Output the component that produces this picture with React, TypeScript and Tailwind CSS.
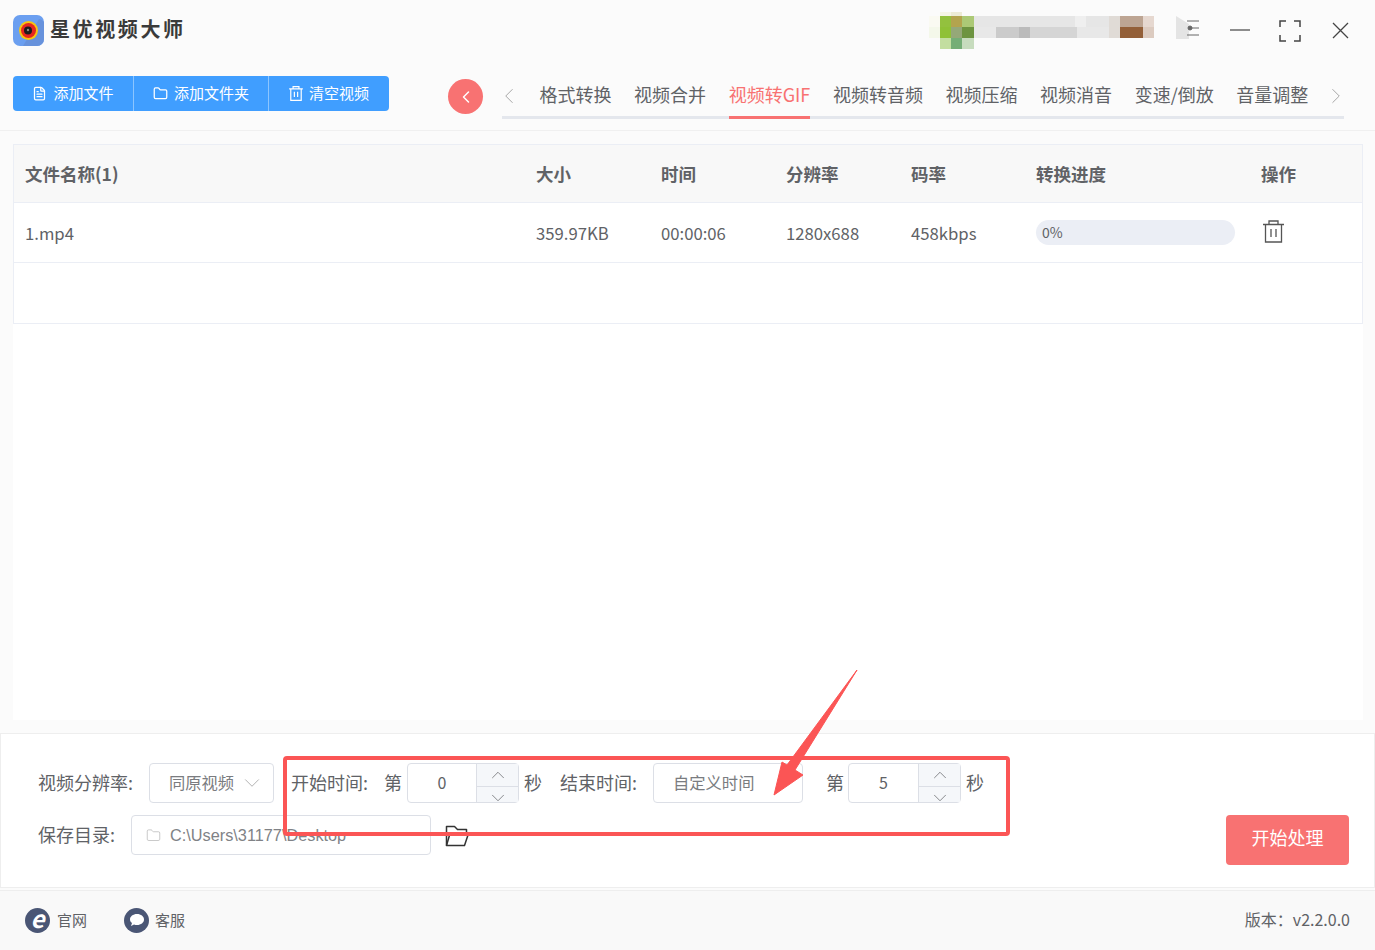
import { ChevronDown, ChevronLeft, ChevronRight, ChevronUp, FileText, Folder } from "lucide-react";

const tabs = ["格式转换", "视频合并", "视频转GIF", "视频转音频", "视频压缩", "视频消音", "变速/倒放", "音量调整"];
const font = { fontFamily: '"Noto Sans CJK SC", "Liberation Sans", sans-serif' };

// pixelated (mosaic) user name in the title bar: [x, y, w, h, colour]
const mosaic: [number, number, number, number, string][] = [
  [0, 4, 11, 11, "#fafaf2"], [0, 15, 11, 11, "#f4f8ea"], [11, 0, 11, 4, "#f5f5e6"], [11, 4, 11, 11, "#93c13e"], [11, 15, 11, 11, "#8fc136"],
  [22, 0, 11, 4, "#ecebd6"], [22, 4, 11, 11, "#b3a44e"], [22, 15, 11, 11, "#95a878"], [11, 26, 11, 11, "#c3dea0"],
  [33, 4, 12, 11, "#acc976"], [33, 15, 12, 11, "#6d9440"], [22, 26, 11, 11, "#75ae76"], [33, 26, 12, 11, "#c7dcbe"],
  [45, 4, 180, 11, "#e6e6e6"], [45, 15, 180, 11, "#e8e8e8"], [67, 15, 23, 11, "#cbcbcb"], [90, 15, 11, 11, "#bbbbbb"],
  [101, 15, 47, 11, "#d5d5d5"], [146, 4, 11, 11, "#efefef"], [180, 4, 11, 22, "#e0dbd6"], [191, 4, 23, 11, "#bda593"],
  [191, 15, 23, 11, "#935f38"], [214, 4, 11, 11, "#e6d8d0"], [214, 15, 11, 11, "#dccbc0"],
];

function TrashIcon({ width, height, stroke, strokeWidth, className }: { width: number; height: number; stroke: string; strokeWidth: number; className?: string }) {
  return (
    <svg width={width} height={height} viewBox="0 0 21 23" fill="none" stroke={stroke} strokeWidth={strokeWidth} className={className}>
      <path d="M0 4.500h21M6 4.500V1h9v3.500M2.500 4.500V22h16V4.500M8 9v8M13 9v8" />
    </svg>
  );
}

function Stepper({ value, width }: { value: string; width: string }) {
  return (
    <div className={`flex h-10 rounded border border-[#dcdfe6] bg-white ${width}`}>
      <div className="flex flex-1 items-center justify-center pb-[2px] text-[16px] text-[#606266]">{value}</div>
      <div className="flex w-[42px] flex-col border-l border-[#dcdfe6] bg-[#f5f7fa] text-[#606266]">
        <div className="flex flex-1 items-center justify-center border-b border-[#dcdfe6]">
          <ChevronUp size={22} strokeWidth={0.8} />
        </div>
        <div className="flex flex-1 items-center justify-center">
          <ChevronDown size={22} strokeWidth={0.8} />
        </div>
      </div>
    </div>
  );
}

export default function App() {
  return (
    <div className="relative flex h-[950px] w-[1375px] flex-col overflow-hidden bg-[#fbfbfb]" style={font}>
      {/* title bar */}
      <div className="flex h-[76px] shrink-0 items-start justify-between">
        <div className="ml-[13px] mt-[15px] flex items-center gap-[6px]">
          <svg width="31" height="31" viewBox="0 0 31 31">
            <rect width="31" height="31" rx="7" fill="#6b9ff0" />
            <path d="M31 7v17a7 7 0 0 1-7 7H10L26 4a7 7 0 0 1 5 3z" fill="#6792dc" />
            <circle cx="15.500" cy="15.500" r="9.500" fill="#f7c511" />
            <circle cx="15.500" cy="15.500" r="7.500" fill="#e5261f" />
            <circle cx="15" cy="15.500" r="4" fill="#1c1c1c" />
            <circle cx="15" cy="15" r="1.200" fill="#8a8a8a" />
          </svg>
          <span className="-mt-[4px] text-[20px] font-bold tracking-[2.6px] text-[#3a3a3a]">星优视频大师</span>
        </div>
        <div className="mr-[26px] mt-[12px] flex items-start">
          <svg width="226" height="38" viewBox="0 0 226 38" className="mr-[21px]">
            {mosaic.map(([x, y, w, h, c], i) => (
              <rect key={i} x={x} y={y} width={w} height={h} fill={c} />
            ))}
          </svg>
          <svg width="24" height="24" viewBox="0 0 24 24" fill="none" stroke="#666" strokeWidth="1" className="mr-[30px] mt-[4px]">
            <path d="M0 0l13 8V23H0z" fill="#e4e4e4" stroke="none" />
            <path d="M11 5h12M15 12h8M11 19h12" />
            <circle cx="14" cy="12" r="2" fill="#666" />
          </svg>
          <svg width="20" height="20" viewBox="0 0 20 20" stroke="#444" strokeWidth="1.200" className="mr-[29px] mt-[8px]">
            <path d="M0 10h20" />
          </svg>
          <svg width="22" height="22" viewBox="0 0 22 22" fill="none" stroke="#444" strokeWidth="1.500" className="mr-[31px] mt-[8px]">
            <path d="M1 7V1h6M15 1h6v6M21 15v6h-6M7 21H1v-6" />
          </svg>
          <svg width="17" height="17" viewBox="0 0 17 17" stroke="#444" strokeWidth="1.300" className="mt-[10px]">
            <path d="M1 1l15 15M16 1L1 16" />
          </svg>
        </div>
      </div>

      {/* toolbar */}
      <div className="flex h-[55px] shrink-0 items-start border-b border-[#f0f0f0]">
        <div className="ml-[13px] flex h-[35px] w-[376px] rounded bg-[#409eff] text-[15px] text-white">
          <div className="flex w-[121px] items-center justify-center gap-[6px] border-r border-[#8cc5ff]">
            <FileText size={15} />
            添加文件
          </div>
          <div className="flex w-[135px] items-center justify-center gap-[6px] border-r border-[#8cc5ff]">
            <Folder size={15} />
            添加文件夹
          </div>
          <div className="flex flex-1 items-center justify-center gap-[6px]">
            <TrashIcon width={14} height={15} stroke="#fff" strokeWidth={1.800} />
            清空视频
          </div>
        </div>
        <div className="ml-[59px] mt-[3px] flex h-[35px] w-[35px] items-center justify-center rounded-full bg-[#f87272] text-white">
          <ChevronLeft size={20} strokeWidth={1.800} />
        </div>
        <div className="relative ml-[19px] h-[43px] w-[842px] border-b-[3px] border-[#e4e7ed]">
          <ChevronLeft size={26} strokeWidth={0.8} className="absolute -left-[6px] top-[7px] text-[#999]" />
          <div className="ml-[37.5px] flex gap-[22.6px] whitespace-nowrap text-[18px] leading-[37px] text-[#606266]">
            {tabs.map((t) =>
              t === "视频转GIF" ? (
                <div key={t} className="h-[43px] border-b-[3px] border-[#f87272] text-[#f87272]">
                  {t}
                </div>
              ) : (
                <div key={t}>{t}</div>
              )
            )}
          </div>
          <ChevronRight size={26} strokeWidth={0.8} className="absolute -right-[5px] top-[7px] text-[#999]" />
        </div>
      </div>

      {/* file table */}
      <div className="ml-[13px] mt-[13px] h-[576px] w-[1350px] shrink-0 bg-white">
        <div className="border border-[#ebeef5] text-[#606266]">
          <div className="grid h-[58px] grid-cols-[511px_125px_125px_125px_125px_225px_1fr] items-center border-b border-[#ebeef5] bg-[#f8f8f8] pl-[11px] pt-[2px] text-[17.5px] font-bold">
            <div>文件名称(1)</div>
            <div>大小</div>
            <div>时间</div>
            <div>分辨率</div>
            <div>码率</div>
            <div>转换进度</div>
            <div>操作</div>
          </div>
          <div className="grid h-[60px] grid-cols-[511px_125px_125px_125px_125px_225px_1fr] items-center border-b border-[#ebeef5] pl-[11px] pt-[2px] text-[16.7px]">
            <div>1.mp4</div>
            <div>359.97KB</div>
            <div>00:00:06</div>
            <div>1280x688</div>
            <div>458kbps</div>
            <div className="-mt-[2px] flex h-[25px] w-[199px] items-center rounded-full bg-[#ebeef5] pl-[6px] text-[14px]">0%</div>
            <TrashIcon width={21} height={23} stroke="#555" strokeWidth={1.300} className="-mt-[5px] ml-[2px]" />
          </div>
          <div className="h-[60px]" />
        </div>
      </div>

      {/* settings panel */}
      <div className="mt-[13px] flex h-[155px] shrink-0 items-start justify-between border border-[#eeeeee] bg-white text-[18px] text-[#606266]">
        <div className="ml-[37px] mt-[29px] flex flex-col gap-[12px]">
          <div className="flex h-10 items-center">
            <span className="-mt-[2px] w-[111px]">视频分辨率:</span>
            <div className="flex h-10 w-[125px] items-center justify-between rounded border border-[#dcdfe6] pl-[19px] pr-[8px] text-[16.3px] text-[#7a7c80]">
              <span className="-mt-[2px]">同原视频</span>
              <ChevronDown size={26} strokeWidth={0.7} className="text-[#999]" />
            </div>
            <span className="-mt-[2px] ml-[17px] w-[93px]">开始时间:</span>
            <span className="-mt-[2px] mr-[5px]">第</span>
            <Stepper value="0" width="w-[112px]" />
            <span className="-mt-[2px] ml-[5px]">秒</span>
            <span className="-mt-[2px] ml-[18px] w-[93px]">结束时间:</span>
            <div className="flex h-10 w-[150px] items-center rounded border border-[#dcdfe6] pb-[2px] pl-[19px] text-[16.3px] text-[#7a7c80]">自定义时间</div>
            <span className="-mt-[2px] ml-[23px] mr-[4px]">第</span>
            <Stepper value="5" width="w-[113px]" />
            <span className="-mt-[2px] ml-[5px]">秒</span>
          </div>
          <div className="flex h-10 items-center">
            <span className="-mt-[2px] w-[93px]">保存目录:</span>
            <div className="flex h-10 w-[300px] items-center gap-[9px] rounded border border-[#dcdfe6] pl-[14px] text-[16.3px] text-[#808286]" style={{ fontFamily: '"Liberation Sans", sans-serif' }}>
              <Folder size={15} strokeWidth={1} className="text-[#aaa]" />
              C:\Users\31177\Desktop
            </div>
            <svg width="25" height="22" viewBox="0 0 25 22" fill="none" stroke="#333" strokeWidth="1.500" strokeLinejoin="round" className="ml-[14px] mt-[2px]">
              <path d="M1.500 20.500V1.500h8l3 3h9v4" />
              <path d="M1.500 20.500h18l4-12H5z" />
            </svg>
          </div>
        </div>
        <div className="mr-[25px] mt-[81px] flex h-[50px] w-[123px] items-center justify-center rounded bg-[#f87272] pb-[5px] text-[18px] text-white">开始处理</div>
      </div>

      {/* footer */}
      <div className="mt-[2px] flex flex-1 items-center justify-between border-t border-[#eeeeee] bg-[#f9f9f9] pl-[25px] pr-[25px] text-[#606266]">
        <div className="-mt-[1px] flex items-center text-[15px]">
          <span className="flex h-[25px] w-[25px] items-center justify-center rounded-full bg-[#4a5675] pb-[5px] text-[24px] font-bold italic leading-none text-white">e</span>
          <span className="ml-[7px]">官网</span>
          <span className="ml-[37px] flex h-[25px] w-[25px] items-center justify-center rounded-full bg-[#4a5675]">
            <svg width="14" height="13" viewBox="0 0 14 13">
              <path d="M7 0c4 0 7 2.400 7 5.500S11 11 7 11c-1 0-2 0-3-.5L1 12l1-3C.7 8 0 7 0 5.500 0 2.400 3 0 7 0z" fill="#fff" />
            </svg>
          </span>
          <span className="ml-[6px]">客服</span>
        </div>
        <div className="-mt-[3px] text-[16px]">版本：v2.2.0.0</div>
      </div>

      {/* red annotation drawn over the screenshot */}
      <div className="pointer-events-none absolute left-[283px] top-[756px] h-[80px] w-[727px] rounded-sm border-[4px] border-[#fb5555]" />
      <svg className="pointer-events-none absolute left-[760px] top-[660px]" width="110" height="150" viewBox="0 0 110 150">
        <path d="M97 10 L35 110 L43 115 L14 135 L22 102 L27 105 Z" fill="#fb5555" stroke="#fb5555" strokeWidth="1" strokeLinejoin="round" />
      </svg>
    </div>
  );
}
